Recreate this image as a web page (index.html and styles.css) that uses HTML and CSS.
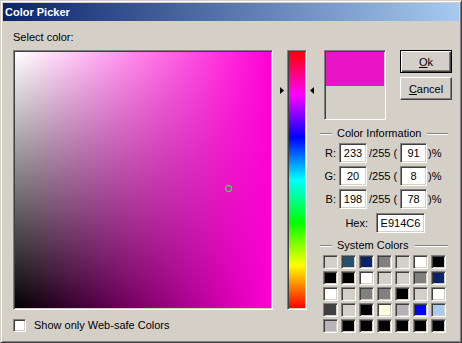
FILE: index.html
```html
<!DOCTYPE html>
<html lang="en">

<head>
    <meta charset="UTF-8">
    <title>Color Picker</title>
    <link rel="stylesheet" href="styles.css">
</head>

<body>
    <div class="window">
        <div class="titlebar">Color Picker</div>
        <div class="content">
            <div class="select-label">Select color:</div>
            <div class="main">
                <div class="left-col">
                    <div class="field">
                        <svg class="marker" width="9" height="9" viewBox="0 0 9 9"><circle cx="4.5" cy="4.5" r="3" fill="none" stroke="#2ee040" stroke-width="1.3"/></svg>
                    </div>
                    <label class="websafe">
                        <span class="checkbox"></span>
                        Show only Web-safe Colors
                    </label>
                </div>

                <div class="hue">
                    <div class="hue-strip"></div>
                    <svg class="arrow arrow-left" width="4" height="7" viewBox="0 0 4 7"><polygon points="0,0 4,3.5 0,7" fill="#000"/></svg>
                    <svg class="arrow arrow-right" width="4" height="7" viewBox="0 0 4 7"><polygon points="4,0 0,3.5 4,7" fill="#000"/></svg>
                </div>

                <div class="right-col">
                    <div class="top-row">
                        <div class="preview">
                            <div class="preview-new"></div>
                        </div>
                        <div class="buttons">
                            <button class="btn btn-default"><u>O</u>k</button>
                            <button class="btn"><u>C</u>ancel</button>
                        </div>
                    </div>

                    <div class="group-title">Color Information</div>
                    <div class="rgb-row">
                        <span class="rgb-label">R:</span>
                        <span class="box val">233</span>
                        <span class="of">/255 (</span>
                        <span class="box pct">91</span>
                        <span class="unit">)%</span>
                    </div>
                    <div class="rgb-row">
                        <span class="rgb-label">G:</span>
                        <span class="box val">20</span>
                        <span class="of">/255 (</span>
                        <span class="box pct">8</span>
                        <span class="unit">)%</span>
                    </div>
                    <div class="rgb-row">
                        <span class="rgb-label">B:</span>
                        <span class="box val">198</span>
                        <span class="of">/255 (</span>
                        <span class="box pct">78</span>
                        <span class="unit">)%</span>
                    </div>
                    <div class="hex-row">
                        <span class="hex-label">Hex:</span>
                        <span class="box hex">E914C6</span>
                    </div>

                    <div class="group-title group-sys">System Colors</div>
                    <div class="swatches">
                        <span class="swatch" style="background:#d4d0c8"></span>
                        <span class="swatch" style="background:#24506c"></span>
                        <span class="swatch" style="background:#0a246a"></span>
                        <span class="swatch" style="background:#808080"></span>
                        <span class="swatch" style="background:#d4d0c8"></span>
                        <span class="swatch" style="background:#ffffff"></span>
                        <span class="swatch" style="background:#000000"></span>

                        <span class="swatch" style="background:#000000"></span>
                        <span class="swatch" style="background:#000000"></span>
                        <span class="swatch" style="background:#ffffff"></span>
                        <span class="swatch" style="background:#d4d0c8"></span>
                        <span class="swatch" style="background:#d4d0c8"></span>
                        <span class="swatch" style="background:#808080"></span>
                        <span class="swatch" style="background:#0a246a"></span>

                        <span class="swatch" style="background:#ffffff"></span>
                        <span class="swatch" style="background:#d4d0c8"></span>
                        <span class="swatch" style="background:#808080"></span>
                        <span class="swatch" style="background:#808080"></span>
                        <span class="swatch" style="background:#000000"></span>
                        <span class="swatch" style="background:#d4d0c8"></span>
                        <span class="swatch" style="background:#ffffff"></span>

                        <span class="swatch" style="background:#404040"></span>
                        <span class="swatch" style="background:#d4d0c8"></span>
                        <span class="swatch" style="background:#000000"></span>
                        <span class="swatch" style="background:#ffffe1"></span>
                        <span class="swatch" style="background:#b4b0b8"></span>
                        <span class="swatch" style="background:#0000ff"></span>
                        <span class="swatch" style="background:#a6caf0"></span>

                        <span class="swatch" style="background:#b8b4b8"></span>
                        <span class="swatch" style="background:#000000"></span>
                        <span class="swatch" style="background:#000000"></span>
                        <span class="swatch" style="background:#000000"></span>
                        <span class="swatch" style="background:#000000"></span>
                        <span class="swatch" style="background:#000000"></span>
                        <span class="swatch" style="background:#000000"></span>
                    </div>
                </div>
            </div>
        </div>
    </div>
</body>

</html>
```

FILE: styles.css
```css
body {
    margin: 0;
    padding: 0;
    font-family: "Liberation Sans", Arial, sans-serif;
    font-size: 11px;
    color: #000;
    background-color: #d4d0c8;
}

.window {
    width: 462px;
    height: 343px;
    box-sizing: border-box;
    overflow: hidden;
    background: #d4d0c8;
    border: 1px solid;
    border-color: #d4d0c8 #404040 #404040 #d4d0c8;
    box-shadow: inset 1px 1px #fff, inset -1px -1px #808080;
    padding: 2px;
}

.titlebar {
    height: 18px;
    line-height: 18px;
    padding-left: 2px;
    font-weight: bold;
    color: #fff;
    background: linear-gradient(to right, #0a246a, #a6caf0);
}

.content {
    padding: 10px 7px 0 10px;
}

.select-label {
    line-height: 13px;
    height: 13px;
    margin-bottom: 6px;
}

.main {
    display: flex;
}

/* sunken 2px frame, windows classic */
.field,
.hue-strip,
.preview,
.box,
.checkbox,
.swatch {
    box-sizing: border-box;
    border: 1px solid;
    border-color: #808080 #fff #fff #808080;
    box-shadow: inset 1px 1px #404040, inset -1px -1px #d4d0c8;
}

.left-col {
    width: 260px;
}

/* hue colour mixed in along x, white fading to black along y */
.field {
    position: relative;
    width: 260px;
    height: 260px;
    background:
        linear-gradient(to right, rgba(255, 0, 212, 0), #ff00d4),
        linear-gradient(to bottom, #fff, #000);
    background-origin: content-box;
    padding: 1px;
}

.marker {
    position: absolute;
    left: 210px;
    top: 133px;
    display: block;
}

.websafe {
    display: flex;
    align-items: center;
    margin-top: 9px;
    line-height: 13px;
}

.checkbox {
    width: 13px;
    height: 13px;
    background: #fff;
    margin-right: 8px;
}

.hue {
    position: relative;
    margin-left: 14px;
    width: 20px;
}

.hue-strip {
    width: 20px;
    height: 260px;
    padding: 1px;
    background: linear-gradient(to bottom, #f00, #f0f, #00f, #0ff, #0f0, #ff0, #f00);
    background-origin: content-box;
}

.arrow {
    position: absolute;
    top: 37px;
    display: block;
}

.arrow-left {
    left: -7px;
}

.arrow-right {
    right: -7px;
}

.right-col {
    margin-left: 13px;
    width: 132px;
}

.top-row {
    display: flex;
    height: 70px;
}

.preview {
    margin-left: 4px;
    width: 62px;
    height: 70px;
    padding: 1px;
    background: #d4d0c8;
}

.preview-new {
    height: 34px;
    background: #e914c6;
}

.buttons {
    margin-left: 14px;
    display: flex;
    flex-direction: column;
    gap: 4px;
}

.btn {
    width: 52px;
    height: 23px;
    padding: 0;
    font-family: inherit;
    font-size: 11px;
    color: #000;
    background: #d4d0c8;
    border: 1px solid;
    border-color: #fff #404040 #404040 #fff;
    box-shadow: inset -1px -1px #808080;
}

.btn-default {
    border: 1px solid #000;
    box-shadow: inset 1px 1px #fff, inset -1px -1px #404040, inset -2px -2px #808080;
}

.group-title {
    display: flex;
    align-items: center;
    height: 13px;
    line-height: 13px;
    margin-top: 7px;
    margin-bottom: 3px;
}

.group-title::before,
.group-title::after {
    content: "";
    height: 1px;
    border-bottom: 1px solid #fff;
    background: #808080;
}

.group-title::before {
    width: 12px;
    margin-right: 5px;
}

.group-title::after {
    flex: 1;
    margin-left: 6px;
    margin-right: 4px;
}

.group-sys {
    margin-top: 6px;
    margin-bottom: 3px;
}

.rgb-row,
.hex-row {
    display: flex;
    align-items: center;
    height: 20px;
    margin-bottom: 3px;
}

.hex-row {
    margin-top: 4px;
    margin-bottom: 0;
}

.rgb-label {
    width: 16px;
    text-align: right;
    margin-right: 3px;
}

.box {
    height: 20px;
    line-height: 18px;
    background: #fff;
    text-align: center;
}

.val {
    width: 28px;
}

.of {
    width: 31px;
    padding-left: 2px;
}

.pct {
    width: 27px;
}

.unit {
    padding-left: 1px;
}

.hex-label {
    width: 48px;
    text-align: right;
    margin-right: 8px;
}

.hex {
    width: 49px;
}

.swatches {
    display: grid;
    grid-template-columns: repeat(7, 15px);
    grid-auto-rows: 14px;
    column-gap: 3px;
    row-gap: 2px;
    margin-left: 3px;
}
```
